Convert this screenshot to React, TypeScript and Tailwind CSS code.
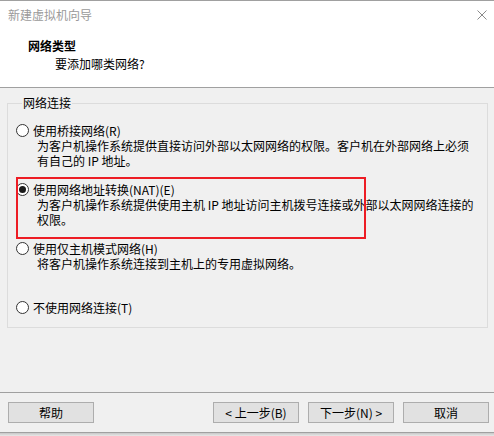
import React from "react"

const font = { fontFamily: '"Noto Sans CJK SC", "Microsoft YaHei", sans-serif' }

function Radio({ checked }: { checked?: boolean }) {
  return (
    <span className="w-[13px] h-[13px] rounded-full border border-[#333333] bg-white flex items-center justify-center shrink-0">
      {checked && <span className="w-[7px] h-[7px] rounded-full bg-[#1a1a1a]" />}
    </span>
  )
}

function Option({ label, checked, lines }: { label: string; checked?: boolean; lines: string[] }) {
  return (
    <div className="h-[59px]">
      <div className="flex items-center h-[15px] gap-[4px]">
        <Radio checked={checked} />
        <span className="leading-[15px]">{label}</span>
      </div>
      <div className="pl-[21px]">
        {lines.map((l) => (
          <div key={l} className="leading-[15px] whitespace-nowrap">{l}</div>
        ))}
      </div>
    </div>
  )
}

function Btn({ children }: { children: React.ReactNode }) {
  return (
    <button className="w-[86px] h-[21px] bg-[#e1e1e1] border border-[#adadad] text-[12px] leading-[19px] text-black flex items-center justify-center">
      {children}
    </button>
  )
}

export default function App() {
  return (
    <div className="relative w-[494px] h-[436px] bg-[#f0f0f0] text-[12px] text-black flex flex-col overflow-hidden" style={font}>
      {/* header */}
      <div className="h-[88px] bg-white border-t border-b border-[#a0a0a0]">
        <div className="h-[28px] flex items-center justify-between pl-[8px] pr-[7px]">
          <span className="text-[#9a9a9a] leading-[16px]">新建虚拟机向导</span>
          <svg width="10" height="10" viewBox="0 0 10 10">
            <path d="M0.5 0.5 L9.5 9.5 M9.5 0.5 L0.5 9.5" stroke="#8a8a8a" strokeWidth="1" />
          </svg>
        </div>
        <div className="mt-[9px] pl-[28px] font-bold leading-[16px]">网络类型</div>
        <div className="mt-[2px] pl-[55px] leading-[16px]">要添加哪类网络?</div>
      </div>

      {/* group box */}
      <fieldset className="mt-[7px] ml-[7px] mr-[6px] border border-[#dcdcdc] pl-[8px] pt-[12px] pb-[12px]">
        <legend className="ml-[6px] px-[1px] leading-[16px]">网络连接</legend>
        <Option
          label="使用桥接网络(R)"
          lines={["为客户机操作系统提供直接访问外部以太网网络的权限。客户机在外部网络上必须", "有自己的 IP 地址。"]}
        />
        <Option
          label="使用网络地址转换(NAT)(E)"
          checked
          lines={["为客户机操作系统提供使用主机 IP 地址访问主机拨号连接或外部以太网网络连接的", "权限。"]}
        />
        <Option label="使用仅主机模式网络(H)" lines={["将客户机操作系统连接到主机上的专用虚拟网络。"]} />
        <div className="flex items-center h-[15px] gap-[4px]">
          <Radio />
          <span className="leading-[15px]">不使用网络连接(T)</span>
        </div>
      </fieldset>

      <div className="flex-1" />

      {/* footer */}
      <div className="border-t border-b border-[#a0a0a0] pt-[9px] pb-[9px] pl-[8px] pr-[5px] flex">
        <Btn>帮助</Btn>
        <div className="flex-1" />
        <div className="flex gap-[9px]">
          <Btn>&lt; 上一步(B)</Btn>
          <Btn>下一步(N) &gt;</Btn>
          <Btn>取消</Btn>
        </div>
      </div>
      <div className="h-[3px] bg-gradient-to-b from-[#c8c8c8] to-[#e8e8e8]" />

      {/* annotation */}
      <div className="absolute left-[16px] top-[177px] w-[350px] h-[62px] border-2 border-[#ed1c24] pointer-events-none" />
    </div>
  )
}
